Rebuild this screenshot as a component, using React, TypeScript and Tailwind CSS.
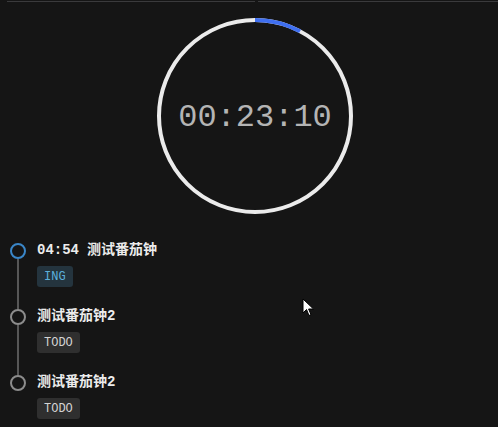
import React from 'react';

type Task = {
  title: string;
  time?: string;
  status: 'ING' | 'TODO';
};

const tasks: Task[] = [
  { time: '04:54', title: '测试番茄钟', status: 'ING' },
  { title: '测试番茄钟2', status: 'TODO' },
  { title: '测试番茄钟2', status: 'TODO' },
];

const R = 96;
const CIRC = 2 * Math.PI * R;
const progress = 28 / 360;

const TimerRing = () => (
  <div className="relative w-[196px] h-[196px]">
    <svg width="196" height="196" viewBox="0 0 196 196" className="absolute inset-0">
      <circle cx="98" cy="98" r={R} fill="none" stroke="#ebebeb" strokeWidth="4" />
      <circle
        cx="98"
        cy="98"
        r={R}
        fill="none"
        stroke="#3f6ff0"
        strokeWidth="4"
        strokeDasharray={`${CIRC * progress} ${CIRC}`}
        transform="rotate(-90 98 98)"
      />
    </svg>
    <div className="absolute inset-0 flex items-center justify-center pt-[4px]">
      <span className="text-[32px] leading-none text-[#b4b4b4] font-['Liberation_Mono',monospace]">00:23:10</span>
    </div>
  </div>
);

export default function App() {
  return (
    <div className="relative w-[498px] h-[427px] overflow-hidden bg-[#151515] font-['Liberation_Mono','Noto_Sans_CJK_SC',monospace]">
      {/* tabs underline */}
      <div className="flex pl-[7px] gap-[3px]">
        <div className="w-[248px] h-[2px] border-b border-[#3a3a3c]" />
        <div className="flex-1 h-[2px] border-b border-[#3a3a3c]" />
      </div>

      <div className="flex justify-center pl-[12px] mt-[16px]">
        <TimerRing />
      </div>

      <div className="mt-[26px] pl-[10px] flex flex-col">
        {tasks.map((t, i) => {
          const first = i === 0;
          const last = i === tasks.length - 1;
          const active = t.status === 'ING';
          return (
            <div key={i} className="flex gap-[11px]">
              <div className="w-4 flex flex-col items-center">
                <div className={`w-[2px] h-[3px] ${first ? '' : 'bg-[#575757]'}`} />
                <div
                  className={`w-4 h-4 rounded-full border-2 shrink-0 ${
                    active ? 'border-[#3a86c8]' : 'border-[#8c8c8c]'
                  }`}
                />
                <div className={`w-[2px] flex-1 ${last ? '' : 'bg-[#575757]'}`} />
              </div>
              <div className={`flex flex-col items-start ${last ? '' : 'pb-[19px]'}`}>
                <div className="h-5 flex items-center text-[14px] font-bold text-[#ececec]">
                  {t.time && <span className="mr-[8px]">{t.time}</span>}
                  <span>{t.title}</span>
                </div>
                <span
                  className={`mt-[6px] h-[21px] px-[7px] rounded-[3px] flex items-center text-[12px] ${
                    active ? 'bg-[#24343e] text-[#5cb0dc]' : 'bg-[#2f2f2f] text-[#d4d4d4]'
                  }`}
                >
                  {t.status}
                </span>
              </div>
            </div>
          );
        })}
      </div>

      {/* mouse pointer */}
      <svg className="absolute left-[302px] top-[298px]" width="13" height="20" viewBox="0 0 13 20">
        <path d="M1 1 L1 15 L4.5 11.5 L7 17.5 L9 16.6 L6.6 11 L11.5 11 Z" fill="#ffffff" stroke="#000000" strokeWidth="1" />
      </svg>
    </div>
  );
}
